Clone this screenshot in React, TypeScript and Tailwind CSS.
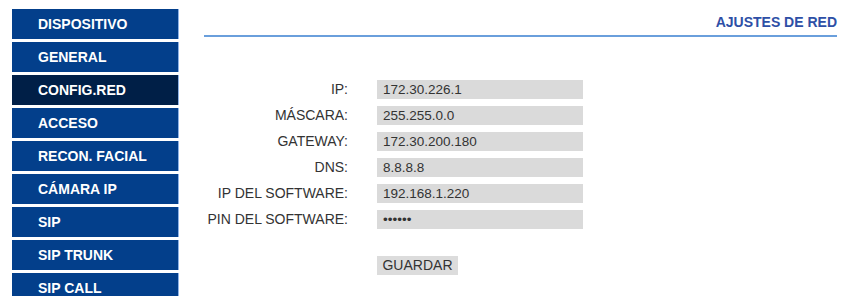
const menu = [
  "DISPOSITIVO",
  "GENERAL",
  "CONFIG.RED",
  "ACCESO",
  "RECON. FACIAL",
  "CÁMARA IP",
  "SIP",
  "SIP TRUNK",
  "SIP CALL",
];

const fields = [
  { label: "IP:", value: "172.30.226.1" },
  { label: "MÁSCARA:", value: "255.255.0.0" },
  { label: "GATEWAY:", value: "172.30.200.180" },
  { label: "DNS:", value: "8.8.8.8" },
  { label: "IP DEL SOFTWARE:", value: "192.168.1.220" },
  { label: "PIN DEL SOFTWARE:", value: "••••••" },
];

export default function App() {
  return (
    <div className="flex h-[304px] w-[853px] items-start overflow-hidden bg-white font-['Liberation_Sans',Arial,sans-serif]">
      {/* Sidebar */}
      <div className="ml-[12px] mt-[9px] flex h-[287px] w-[167px] flex-col gap-[3px] overflow-hidden">
        {menu.map((item) => (
          <div
            key={item}
            className={`flex h-[30px] shrink-0 items-center border-r border-[#8fb3e6] pl-[26px] text-[14px] font-bold text-white ${
              item === "CONFIG.RED" ? "bg-[#001f47]" : "bg-[#033f8b]"
            }`}
          >
            {item}
          </div>
        ))}
      </div>

      {/* Content */}
      <div className="ml-[25px] mr-[16px] flex flex-1 flex-col">
        <div className="mt-[14px] text-right text-[14px] font-bold leading-[16px] text-[#2e4fa6]">
          AJUSTES DE RED
        </div>
        <div className="mt-[5px] h-[2px] bg-[#6a9fdc]" />

        <div className="mt-[43px] flex flex-col gap-[7px]">
          {fields.map((f) => (
            <div key={f.label} className="flex h-[19px] items-center">
              <div className="w-[144px] text-right text-[14px] leading-[19px] text-[#333]">{f.label}</div>
              <div className="ml-[29px] flex h-[19px] w-[206px] items-center bg-[#dadada] pl-[6px] text-[13.5px] leading-[19px] text-[#333]">
                {f.value}
              </div>
            </div>
          ))}
        </div>

        <div className="ml-[173px] mt-[27px] flex">
          <div className="flex h-[19px] w-[81px] items-center justify-center bg-[#dcdcdc] text-[14px] leading-[19px] text-[#333]">
            GUARDAR
          </div>
        </div>
      </div>
    </div>
  );
}
